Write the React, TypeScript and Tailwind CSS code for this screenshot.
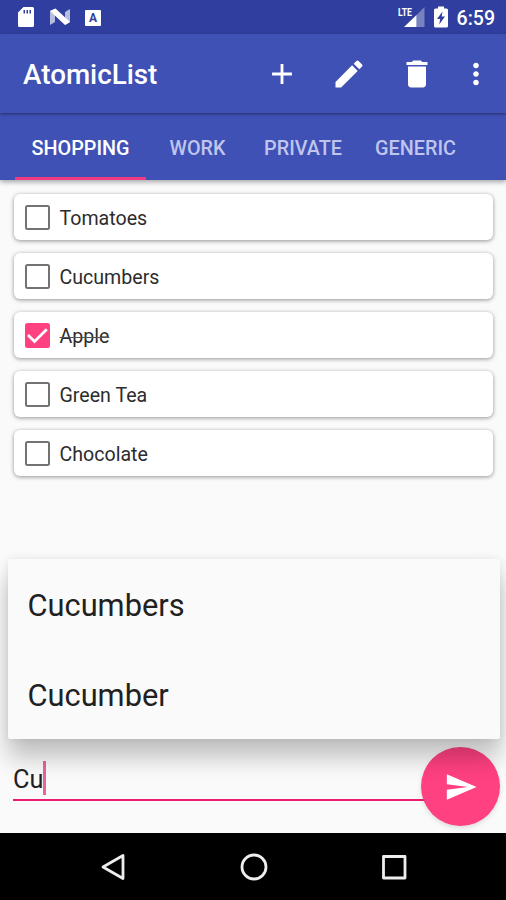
import React from "react";

const TABS = [
  { label: "SHOPPING", box: "w-[131px] text-white", active: true },
  { label: "WORK", box: "w-[103px] text-[#bfc5ed]", active: false },
  { label: "PRIVATE", box: "w-[108px] text-[#bfc5ed]", active: false },
  { label: "GENERIC", box: "w-[117px] text-[#bfc5ed]", active: false },
];

const ITEMS = [
  { label: "Tomatoes", done: false },
  { label: "Cucumbers", done: false },
  { label: "Apple", done: true },
  { label: "Green Tea", done: false },
  { label: "Chocolate", done: false },
];

function Icon({ d, className }: { d: string; className: string }) {
  return (
    <svg viewBox="0 0 24 24" className={`block shrink-0 ${className}`} fill="currentColor">
      <path d={d} />
    </svg>
  );
}

function StatusBar() {
  return (
    <header className="flex h-[34px] shrink-0 items-center bg-[#303f9f] pl-[17px] pr-[11px] text-white">
      <svg viewBox="0 0 18 22" className="h-[22px] w-[18px]">
        <path fill="#fff" fillRule="evenodd" d="M6.5 1H15.5a1.5 1.5 0 0 1 1.5 1.5V19.5a1.5 1.5 0 0 1-1.5 1.5H2.5A1.5 1.5 0 0 1 1 19.5V6.5ZM6.5 4V7.500H8V4ZM9.500 4V7.500H11V4ZM12.500 4V7.500H14V4Z" />
      </svg>
      <svg viewBox="0 0 22 18" className="ml-[14px] h-[18px] w-[22px]">
        <path fill="#fff" opacity=".65" d="M1 3 6 1V14L1 17ZM16 4 21 1V14L16 17Z" />
        <path fill="#fff" d="M1 3 6.500 .5 21 14 16 17Z" />
      </svg>
      <span className="ml-[14px] mt-px flex size-[16px] items-center justify-center rounded-[1px] bg-white text-[12px] font-bold leading-none text-[#303f9f]">A</span>
      <svg viewBox="0 0 28 22" className="ml-auto h-[22px] w-[28px]">
        <text x="0" y="10" fill="#fff" fontSize="11.5" fontWeight="700" textLength="14" lengthAdjust="spacingAndGlyphs">LTE</text>
        <path fill="#fff" opacity=".35" d="M18.500 9 26.500 1V21H18.500Z" />
        <path fill="#fff" d="M6 21 18.500 9V21Z" />
      </svg>
      <svg viewBox="0 0 16 22" className="ml-[7px] h-[22px] w-[16px]">
        <path fill="#fff" d="M5 .5H11V2.500H13.500Q15 2.500 15 4V20Q15 21.500 13.500 21.500H2.500Q1 21.500 1 20V4Q1 2.500 2.500 2.500H5Z" />
        <path fill="#303f9f" d="M9.500 5.500 4 13H7.200L6.200 18.500 12 10.500H8.700Z" />
      </svg>
      <span className="ml-[8px] mt-[3px] text-[19.5px] font-medium leading-none">6:59</span>
    </header>
  );
}

function Toolbar() {
  return (
    <div className="z-10 flex h-[79px] shrink-0 items-center bg-[#3f51b5] pl-[23px] pr-[13px] text-white shadow-[0_1px_3px_rgba(0,0,0,0.45)]">
      <h1 className="mt-[3px] text-[27.8px] font-medium leading-none">AtomicList</h1>
      <div className="ml-auto flex items-center">
        <Icon className="size-[34px]" d="M19 13h-6v6h-2v-6H5v-2h6V5h2v6h6v2z" />
        <Icon className="ml-[32px] size-[36px]" d="M3 17.250V21h3.750L17.810 9.940l-3.750-3.750L3 17.250zM20.710 7.040c.39-.39.39-1.020 0-1.410l-2.340-2.340a.996.996 0 0 0-1.410 0l-1.830 1.830 3.750 3.750 1.830-1.830z" />
        <Icon className="ml-[32px] size-[36px]" d="M6 19c0 1.100.9 2 2 2h8c1.100 0 2-.9 2-2V7H6v12zM19 4h-3.500l-1-1h-5l-1 1H5v2h14V4z" />
        <Icon className="ml-[24px] size-[34px]" d="M12 8c1.100 0 2-.9 2-2s-.9-2-2-2-2 .9-2 2 .9 2 2 2zm0 2c-1.100 0-2 .9-2 2s.9 2 2 2 2-.9 2-2-.9-2-2-2zm0 6c-1.100 0-2 .9-2 2s.9 2 2 2 2-.9 2-2-.9-2-2-2z" />
      </div>
    </div>
  );
}

function Checkbox({ checked }: { checked: boolean }) {
  if (!checked) {
    return <span className="size-[25px] shrink-0 rounded-[2.5px] border-[2.5px] border-[#737373]" />;
  }
  return (
    <span className="flex size-[25px] shrink-0 items-center justify-center rounded-[2.5px] bg-[#ff4081]">
      <svg viewBox="0 0 25 25" className="size-[25px]" fill="none" stroke="#fff" strokeWidth="2.700">
        <path d="M3 12 9.500 18.500 21.800 6.200" />
      </svg>
    </span>
  );
}

export default function App() {
  return (
    <div className="relative flex h-[900px] w-[506px] flex-col overflow-hidden bg-[#fafafa] font-[Roboto,sans-serif]">
      <StatusBar />
      <Toolbar />
      <nav className="flex h-[67px] shrink-0 bg-[#3f51b5] pl-[15px] shadow-[0_2px_5px_rgba(0,0,0,0.35)]">
        {TABS.map((t) => (
          <div key={t.label} className={`flex flex-col items-center text-[19.8px] font-medium ${t.box}`}>
            <span className="flex flex-1 items-center pt-[7px] leading-none">{t.label}</span>
            <span className={`h-[3px] w-full ${t.active ? "bg-[#f03b83]" : ""}`} />
          </div>
        ))}
      </nav>

      <ul className="flex flex-1 flex-col gap-[13px] pl-[14px] pr-[13px] pt-[14px]">
        {ITEMS.map((item) => (
          <li key={item.label} className="flex h-[46px] items-center rounded-[6px] bg-white pl-[10.5px] shadow-[0_1px_4px_rgba(0,0,0,0.42)]">
            <Checkbox checked={item.done} />
            <span className={`ml-[10px] mt-[4px] text-[19.6px] leading-none text-[#2c2c2c] ${item.done ? "line-through decoration-[#555] decoration-1" : ""}`}>{item.label}</span>
          </li>
        ))}
      </ul>

      <div className="flex h-[93px] shrink-0 pl-[13px] pr-[6px]">
        <div className="mt-[16px] flex h-[45px] flex-1 items-center border-b-[2.5px] border-[#e91e72]">
          <span className="mt-[5px] text-[25.300px] leading-none text-[#212121]">Cu</span>
          <span className="mt-px h-[34px] w-[3px] bg-[#f0609a]" />
        </div>
        <button className="-ml-[4px] mt-[7px] flex size-[79px] items-center justify-center rounded-full bg-[#ff4081] text-white shadow-[0_2px_5px_rgba(0,0,0,0.12)]">
          <Icon className="size-[34px]" d="M2.010 21L23 12 2.010 3 2 10l15 2-15 2z" />
        </button>
      </div>

      <div className="absolute left-[7.500px] top-[559px] flex h-[180px] w-[492px] flex-col rounded-[2px] bg-[#fafafa] shadow-[0_18px_24px_rgba(0,0,0,0.24),0_0_8px_rgba(0,0,0,0.08)]">
        <div className="flex h-[90px] items-center pl-[20px] pt-[5px] text-[30.8px] leading-none text-[#212121]">Cucumbers</div>
        <div className="flex h-[90px] items-center pl-[20px] pt-[5px] text-[30.8px] leading-none text-[#212121]">Cucumber</div>
      </div>

      <footer className="flex h-[67px] shrink-0 items-center justify-between bg-black pl-[99px] pr-[98px]">
        <svg viewBox="0 0 28 30" className="h-[30px] w-[28px]" fill="none" stroke="#eee" strokeWidth="2.800" strokeLinejoin="round">
          <path d="M24 3.500V26.500L4 15Z" />
        </svg>
        <svg viewBox="0 0 30 30" className="h-[30px] w-[30px]" fill="none" stroke="#eee" strokeWidth="2.800">
          <circle cx="15" cy="15" r="12" />
        </svg>
        <svg viewBox="0 0 28 30" className="h-[30px] w-[28px]" fill="none" stroke="#eee" strokeWidth="2.800" strokeLinejoin="round">
          <rect x="3.500" y="4.500" width="21.500" height="21.500" />
        </svg>
      </footer>
    </div>
  );
}
